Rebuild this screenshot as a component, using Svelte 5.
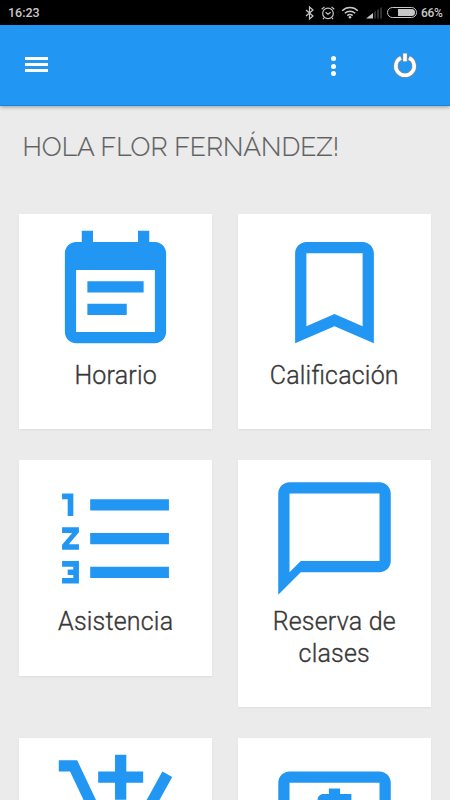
<script lang="ts">
  const userName: string = "Flor Fernández";
  const battery: number = 66;

  type Tile = { label?: string; path: string; shift?: number };

  const tiles: Tile[] = [
    {
      label: "Horario",
      path: "M17 10H7v2h10v-2zm2-7h-1V1h-2v2H8V1H6v2H5c-1.11 0-2 .9-2 2v14c0 1.1.89 2 2 2h14c1.1 0 2-.9 2-2V5c0-1.1-.9-2-2-2zm0 16H5V8h14v11zm-5-5H7v2h7v-2z",
    },
    {
      label: "Calificación",
      path: "M17 3H7c-1.1 0-2 .9-2 2v16l7-3 7 3V5c0-1.1-.9-2-2-2zm0 15l-5-2.18L7 18V5h10v13z",
    },
    {
      label: "Asistencia",
      path: "M2 17h2v.5H3v1h1v.5H2v1h3v-4H2v1zm1-9h1V4H2v1h1v3zm-1 3h1.8L2 13.1v.9h3v-1H3.2L5 10.9V10H2v1zm5-6v2h14V5H7zm0 14h14v-2H7v2zm0-6h14v-2H7v2z",
      shift: 0.5,
    },
    {
      label: "Reserva de clases",
      path: "M20 2H4c-1.1 0-2 .9-2 2v18l4-4h14c1.1 0 2-.9 2-2V4c0-1.1-.9-2-2-2zm0 14H6l-2 2V4h16v12z",
    },
    {
      path: "M11 9h2V6h3V4h-3V1h-2v3H8v2h3v3zm-4 9c-1.1 0-1.99.9-1.99 2S5.9 22 7 22s2-.9 2-2-.9-2-2-2zm10 0c-1.1 0-1.99.9-1.99 2s.89 2 1.99 2 2-.9 2-2-.9-2-2-2zm-9.83-3.25l.03-.12.9-1.63h7.45c.75 0 1.41-.41 1.75-1.03l3.86-7.01L19.42 4h-.01l-1.1 2-2.76 5H8.53l-.13-.27L6.16 6l-.95-2-.94-2H1v2h2l3.6 7.59-1.35 2.45c-.16.28-.25.61-.25.96 0 1.1.9 2 2 2h12v-2H7.42c-.13 0-.25-.11-.25-.25z",
      shift: 0.92,
    },
    {
      path: "M11 17h2v-1h1c.55 0 1-.45 1-1v-3c0-.55-.45-1-1-1h-3v-1h4V8h-2V7h-2v1h-1c-.55 0-1 .45-1 1v3c0 .55.45 1 1 1h3v1H9v2h2v1zm9-13H4c-1.11 0-1.99.89-1.99 2L2 18c0 1.11.89 2 2 2h16c1.11 0 2-.89 2-2V6c0-1.11-.89-2-2-2zm0 14H4V6h16v12z",
    },
  ];
</script>

<div class="screen">
  <div class="status">
    <span class="clock">16:23</span>
    <svg class="bluetooth" viewBox="0 0 10 14" width="10" height="14">
      <path d="M1 4l7 6-3.5 3V1L8 4l-7 6" />
    </svg>
    <svg class="alarm" viewBox="0 0 14 14" width="14" height="14">
      <circle cx="7" cy="7.4" r="5.3" />
      <path d="M4.6 6.3l2.4 2 2.6-2M.7 3.2L3.5.9M13.3 3.2L10.5.9M3 12l-1 1.2M11 12l1 1.2" />
    </svg>
    <svg class="wifi" viewBox="0 0 18 13" width="18" height="13">
      <path d="M1.2 4.7c4.5-4.2 11.1-4.2 15.6 0M3.8 7.3c3-2.7 7.4-2.7 10.4 0M6.3 9.6c1.6-1.4 3.8-1.4 5.4 0" />
      <circle cx="9" cy="11.2" r="1.3" />
    </svg>
    <svg class="signal" viewBox="0 0 16 12" width="16" height="12">
      <path class="on" d="M0 11.5L7 6v5.5z" />
      <path class="off" d="M8 5.3l2-1.5v7.7H8zM11 3l2-1.2v9.7h-2zM14 1l2-1v11.5h-2z" />
    </svg>
    <div class="battery"><div class="level" style="width: {battery}%"></div></div>
    <span class="percent">{battery}%</span>
  </div>

  <header>
    <button class="menu" aria-label="Menú">
      <span></span>
      <span></span>
      <span></span>
    </button>
    <button class="more" aria-label="Más opciones">
      <span></span>
      <span></span>
      <span></span>
    </button>
    <button class="power" aria-label="Salir">
      <svg viewBox="0 0 26 26" width="26" height="26">
        <path class="edge" d="M9 5.8a9.2 9.2 0 1 0 8 0" />
        <path class="face" d="M9 5.8a9.2 9.2 0 1 0 8 0" />
        <path class="edge" d="M13 1v8.8" />
        <path class="face" d="M13 1.5v7.8" />
      </svg>
    </button>
  </header>

  <h1>Hola {userName}!</h1>

  <main>
    {#each tiles as tile}
      <a class="tile" href="#top">
        <svg viewBox="0 0 24 24" width="135" height="135">
          <path transform="translate({tile.shift ?? 0} 0)" d={tile.path} />
        </svg>
        {#if tile.label}
          <span class="label">{tile.label}</span>
        {/if}
      </a>
    {/each}
  </main>
</div>

<style>
  :global(body) {
    background: #ebebeb;
  }

  .screen {
    height: 100vh;
    overflow: hidden;
    background: #ebebeb;
    font-family: Roboto, sans-serif;
  }

  .status {
    box-sizing: border-box;
    display: flex;
    align-items: center;
    height: 25px;
    padding: 0 8px;
    background: #000;
    color: #c8c8c8;
    font-size: 12.5px;
    font-weight: 500;
  }
  .status svg {
    fill: none;
    stroke: #c8c8c8;
    stroke-width: 1.2;
  }
  .clock {
    margin-right: auto;
  }
  .alarm {
    margin-left: 6px;
  }
  .wifi {
    margin-left: 6px;
  }
  .status .wifi {
    stroke-width: 1.5;
  }
  .wifi circle {
    fill: #c8c8c8;
    stroke: none;
  }
  .signal {
    margin-left: 7px;
  }
  .status .signal {
    stroke: none;
  }
  .signal .on {
    fill: #c8c8c8;
  }
  .signal .off {
    fill: #303030;
  }
  .battery {
    box-sizing: border-box;
    display: flex;
    justify-content: flex-end;
    width: 30px;
    height: 11px;
    margin-left: 5px;
    padding: 1px;
    border: 1px solid #c8c8c8;
    border-radius: 6px;
  }
  .level {
    background: #c8c8c8;
    border-radius: 0 4px 4px 0;
  }
  .percent {
    width: 21px;
    margin-left: 4px;
    font-size: 12px;
    letter-spacing: -0.3px;
  }

  header {
    box-sizing: border-box;
    position: relative;
    display: flex;
    align-items: center;
    height: 81px;
    padding: 0 32px 0 25px;
    background: #2196f3;
    border-bottom: 1px solid #1784e0;
    box-shadow: 0 1px 4px rgba(0, 0, 0, 0.35);
  }
  button {
    padding: 0;
    border: none;
    background: none;
    cursor: pointer;
  }
  .menu {
    display: grid;
    gap: 3px;
    width: 23px;
    margin: 0 auto 2px 0;
  }
  .menu span {
    height: 3px;
    background: #fff;
  }
  .more {
    display: grid;
    gap: 2.5px;
    margin-right: 56px;
    margin-top: 2px;
  }
  .more span {
    width: 5px;
    height: 5px;
    border-radius: 50%;
    background: #fff;
  }
  .power {
    height: 26px;
  }
  .power svg {
    display: block;
    fill: none;
  }
  .edge {
    stroke: #8d8d8d;
    stroke-width: 5;
  }
  .face {
    stroke: #fff;
    stroke-width: 3.6;
  }

  h1 {
    margin: 25px 0 0 22.5px;
    color: #606060;
    font-family: Raleway, Lato, sans-serif;
    font-size: 26.3px;
    font-weight: 300;
    line-height: 32px;
    text-transform: uppercase;
    white-space: nowrap;
    -webkit-text-stroke: 0.2px #606060;
  }

  main {
    display: grid;
    grid-template-columns: 193.4px 193.4px;
    align-items: start;
    gap: 31px 25.2px;
    padding: 51px 19px 0;
  }
  .tile {
    box-sizing: border-box;
    display: flex;
    flex-direction: column;
    align-items: center;
    padding: 11px 25px 38px;
    background: #fff;
    box-shadow: 0 1px 2px rgba(0, 0, 0, 0.06);
    color: #383838;
    text-decoration: none;
  }
  .tile svg {
    display: block;
    fill: #2196f3;
  }
  .label {
    font-size: 25px;
    font-weight: 300;
    font-feature-settings: "liga";
    letter-spacing: 0.2px;
    line-height: 31.25px;
    text-align: center;
    -webkit-text-stroke: 0.35px #383838;
  }
</style>
